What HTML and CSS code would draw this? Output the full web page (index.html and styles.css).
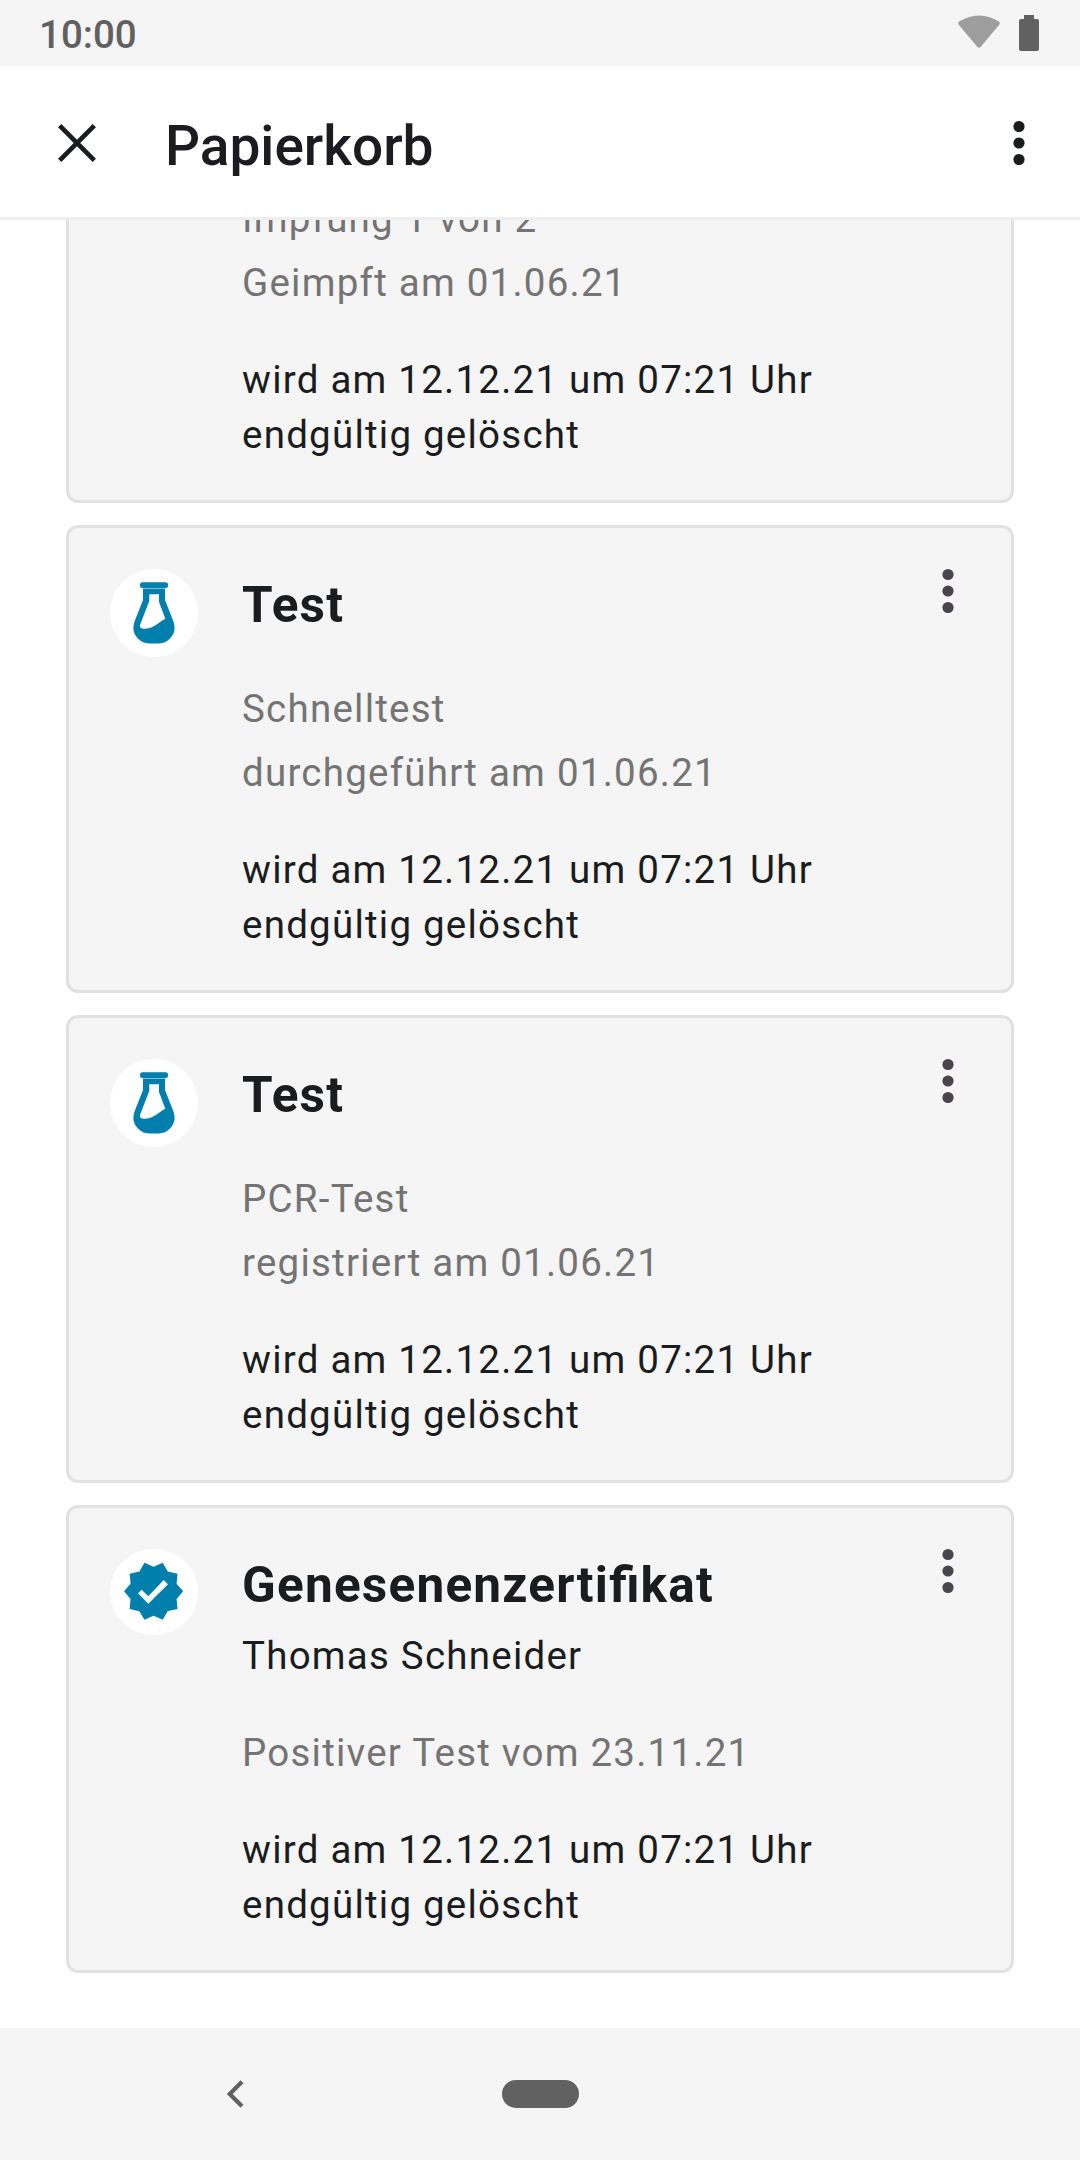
FILE: index.html
```html
<!DOCTYPE html>
<html lang="de">
<head>
<meta charset="utf-8">
<title>Papierkorb</title>
<link rel="stylesheet" href="styles.css">
</head>
<body>
<svg class="defs" width="0" height="0">
  <symbol id="dots" viewBox="0 0 12 46"><circle cx="6" cy="6.5" r="5.6"/><circle cx="6" cy="23" r="5.6"/><circle cx="6" cy="39.5" r="5.6"/></symbol>
  <symbol id="flask" viewBox="0 0 88 88">
    <rect x="30" y="13.3" width="28" height="5.8" rx="2.5"/>
    <path fill-rule="evenodd" d="M33 19.5H55V31L62.5 50C66 58 65 64 60.500 69C57 73 53 74.400 49 74.400H39C35 74.400 31 73 27.500 69C23 64 22 58 25.500 50L33 31ZM39.300 25.300V32L30.200 55.500Q29.300 59.500 33 59.700C42 60.300 46 55 55.300 49.700L49 33V25.300Z"/>
  </symbol>
  <symbol id="seal" viewBox="0 0 88 86">
    <path transform="translate(11.300 9.800) scale(2.690 2.710)" d="M23 12l-2.440-2.790.340-3.690-3.610-.820-1.890-3.200L12 2.960 8.600 1.500 6.710 4.690 3.100 5.500l.340 3.700L1 12l2.440 2.790-.340 3.700 3.610.820L8.600 22.500l3.400-1.470 3.400 1.460 1.890-3.190 3.610-.820-.340-3.690L23 12z"/>
    <path fill="#fff" d="M28 44.300L31.700 40.700L38.300 47.300L53.700 31L58 35.300L38.300 54.700Z"/>
  </symbol>
</svg>

<div class="status">
  <span class="time">10:00</span>
  <svg class="wifi" width="42" height="33" viewBox="0 0 42 33"><path d="M1 6.500Q21-5.500 41 6.500Q42.500 8 41.300 9.700L22.500 32Q21 33.500 19.500 32L.700 9.700Q-.500 8 1 6.500Z"/></svg>
  <svg class="battery" width="20" height="36" viewBox="0 0 20 36"><path d="M5 0H15V4H18Q20 4 20 6V34Q20 36 18 36H2Q0 36 0 34V6Q0 4 2 4H5Z"/></svg>
</div>

<header class="bar">
  <svg class="close" width="38" height="38" viewBox="0 0 38 38"><path d="M1.700 1.700L36.300 36.300M36.300 1.700L1.700 36.300"/></svg>
  <h1>Papierkorb</h1>
  <svg class="more" width="12" height="46"><use href="#dots"/></svg>
</header>

<main class="list">
  <article class="card card-plain">
    <div class="body">
      <p class="info">Impfung 1 von 2<br>Geimpft am 01.06.21</p>
      <p class="deletion">wird am 12.12.21 um 07:21 Uhr endgültig gelöscht</p>
    </div>
  </article>
  <article class="card">
    <div class="badge"><svg width="88" height="88"><use href="#flask"/></svg></div>
    <div class="body">
      <h2>Test</h2>
      <p class="info">Schnelltest<br>durchgeführt am 01.06.21</p>
      <p class="deletion">wird am 12.12.21 um 07:21 Uhr endgültig gelöscht</p>
    </div>
    <svg class="more" width="12" height="46"><use href="#dots"/></svg>
  </article>
  <article class="card">
    <div class="badge"><svg width="88" height="88"><use href="#flask"/></svg></div>
    <div class="body">
      <h2>Test</h2>
      <p class="info">PCR-Test<br>registriert am 01.06.21</p>
      <p class="deletion">wird am 12.12.21 um 07:21 Uhr endgültig gelöscht</p>
    </div>
    <svg class="more" width="12" height="46"><use href="#dots"/></svg>
  </article>
  <article class="card">
    <div class="badge"><svg width="88" height="86"><use href="#seal"/></svg></div>
    <div class="body">
      <h2>Genesenenzertifikat</h2>
      <p class="name">Thomas Schneider</p>
      <p class="info">Positiver Test vom 23.11.21</p>
      <p class="deletion">wird am 12.12.21 um 07:21 Uhr endgültig gelöscht</p>
    </div>
    <svg class="more" width="12" height="46"><use href="#dots"/></svg>
  </article>
</main>

<nav class="nav">
  <svg class="back" width="17" height="28" viewBox="0 0 17 28"><path d="M15 1.700L2.700 14L15 26.300"/></svg>
  <span class="home"></span>
</nav>
</body>
</html>
```
FILE: styles.css
```css
* { box-sizing: border-box; }
body {
  margin: 0;
  height: 2160px;
  display: flex;
  flex-direction: column;
  overflow: hidden;
  background: #fff;
  color: #1a1c1e;
  font-family: Roboto, sans-serif;
}
svg { display: block; flex: none; }
.defs { position: absolute; }
h1, h2, p { margin: 0; }

.status {
  flex: none;
  height: 66px;
  display: flex;
  align-items: flex-start;
  padding: 15px 41px 0 39px;
  background: #f5f5f5;
}
.time {
  flex: 1;
  margin-top: -3px;
  font-size: 38.5px;
  line-height: 45px;
  font-weight: 500;
  color: #616161;
}
.wifi { margin-right: 19.5px; fill: #9e9e9e; }
.battery { fill: #616161; }

.bar {
  flex: none;
  height: 154px;
  display: flex;
  align-items: center;
  padding: 3px 55px 0 58px;
  border-bottom: 3px solid #eee;
}
.close { stroke: #1a1c1e; stroke-width: 4.7; }
h1 {
  flex: 1;
  margin: 6px 0 0 69px;
  font-size: 55px;
  line-height: 66px;
  font-weight: 500;
  color: #1c1b1f;
}
.bar .more { fill: #1a1c1e; }

.list {
  flex: 1;
  min-height: 0;
  display: flex;
  flex-direction: column;
  justify-content: flex-end;
  gap: 22px;
  padding: 0 66px 55px;
  overflow: hidden;
}
.card {
  flex: none;
  display: flex;
  align-items: flex-start;
  padding: 41px 57px 38px 41px;
  border: 3px solid #e1e1e1;
  border-radius: 12px;
  background: #f5f5f5;
}
.card-plain { padding-left: 173px; }
.badge {
  flex: none;
  margin-right: 44px;
  border-radius: 50%;
  background: #fff;
  fill: #007fad;
}
.body {
  flex: 1;
  padding: 3px 80px 0 0;
  font-size: 38.5px;
  line-height: 55px;
  letter-spacing: 1.23px;
}
h2 {
  font-size: 49.5px;
  line-height: 66px;
  font-weight: 700;
  letter-spacing: 1.22px;
  font-feature-settings: "liga" 1;
}
.name { margin-top: 10px; }
.info {
  margin-top: 38px;
  line-height: 64px;
  color: #747474;
}
h2 + .info { margin-top: 39px; }
.deletion { margin-top: 37px; }
.card .more { fill: #49454f; margin-top: -1px; }

.nav {
  flex: none;
  height: 132px;
  display: flex;
  align-items: center;
  padding-left: 227px;
  background: #f5f5f5;
}
.back { fill: none; stroke: #616161; stroke-width: 4.2; }
.home {
  width: 77px;
  height: 28px;
  margin-left: 258px;
  border-radius: 14px;
  background: #616161;
}
```
